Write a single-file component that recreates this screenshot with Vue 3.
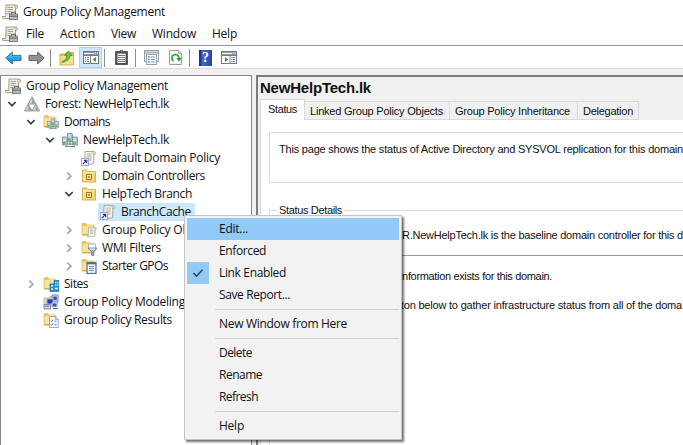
<script setup>
const vFit = {
  mounted(el, { value }) {
    if (!value) return
    const range = document.createRange()
    range.selectNodeContents(el)
    const natural = range.getBoundingClientRect().width
    el.style.letterSpacing = (value - natural) / el.textContent.trim().length + 'px'
  }
}

const menus = [
  { label: 'File', w: 18, cell: 34 },
  { label: 'Action', w: 35, cell: 51 },
  { label: 'View', w: 25, cell: 41 },
  { label: 'Window', w: 44, cell: 60 },
  { label: 'Help', w: 25, cell: 41 }
]

const tree = [
  { label: 'Group Policy Management', level: 0, icon: 'scroll', w: 142 },
  { label: 'Forest: NewHelpTech.lk', level: 1, icon: 'forest', open: true, w: 124 },
  { label: 'Domains', level: 2, icon: 'domains', open: true, w: 46 },
  { label: 'NewHelpTech.lk', level: 3, icon: 'domain', open: true, w: 86 },
  { label: 'Default Domain Policy', level: 4, icon: 'link', w: 118 },
  { label: 'Domain Controllers', level: 4, icon: 'ou', open: false, w: 103 },
  { label: 'HelpTech Branch', level: 4, icon: 'ou', open: true, w: 90 },
  { label: 'BranchCache', level: 5, icon: 'link', selected: true, w: 70 },
  { label: 'Group Policy Objects', level: 4, icon: 'gpo', open: false, w: 112 },
  { label: 'WMI Filters', level: 4, icon: 'wmi', open: false, w: 59 },
  { label: 'Starter GPOs', level: 4, icon: 'starter', open: false, w: 66 },
  { label: 'Sites', level: 2, icon: 'sites', open: false, w: 24 },
  { label: 'Group Policy Modeling', level: 2, icon: 'modeling', w: 121 },
  { label: 'Group Policy Results', level: 2, icon: 'results', w: 108 }
]

const tabs = [
  { label: 'Status', w: 29, cell: 45, active: true },
  { label: 'Linked Group Policy Objects', w: 133, cell: 145 },
  { label: 'Group Policy Inheritance', w: 115, cell: 128 },
  { label: 'Delegation', w: 50, cell: 61 }
]

const actions = [
  { label: 'Edit...', w: 29, hot: true },
  { label: 'Enforced', w: 47 },
  { label: 'Link Enabled', w: 67, checked: true },
  { label: 'Save Report...', w: 71 },
  null,
  { label: 'New Window from Here', w: 128 },
  null,
  { label: 'Delete', w: 33 },
  { label: 'Rename', w: 43 },
  { label: 'Refresh', w: 39 },
  null,
  { label: 'Help', w: 25 }
]
</script>

<template>
  <div class="window">
    <svg class="defs" width="0" height="0" aria-hidden="true">
      <defs>
        <linearGradient id="blue" x1="0" y1="0" x2="0" y2="1">
          <stop offset="0" stop-color="#8fe0fb" /><stop offset=".5" stop-color="#27a5e3" /><stop offset="1" stop-color="#1582c5" />
        </linearGradient>
        <symbol id="folder" viewBox="0 0 16 16">
          <path d="M1 2.5q0-1 1-1h3l1.5 1.5H12q1 0 1 1V13H1z" fill="#eac766" stroke="#d7ad4d" stroke-width=".6" />
          <path d="M1.5 4h4l1-.8H12.5V12.7H1.5z" fill="#f9e29b" />
          <path d="M1.3 12.8h11.5" stroke="#cba044" />
        </symbol>
        <symbol id="scroll" viewBox="0 0 16 16">
          <path d="M4 1h9.5q2 0 2 2t-2 1.3V12q0 2.5-2.5 2.5H1.5Q0 14.5 0 12.5h3.7z" fill="#f1eedd" stroke="#8b8878" stroke-width=".8" />
          <path d="M13.5 1q-1.8 1 0 3.3M5.5 3.5h5.5M5.5 5.5h5.5M5.4 7.5h4M5.2 9.5h3" fill="none" stroke="#9b998d" stroke-width=".9" />
          <rect x="7.5" y="10" width="8" height="5.5" fill="#b9bec2" stroke="#63696e" stroke-width=".8" />
          <path d="M9.5 10V8.3h4V10" fill="none" stroke="#555d65" />
          <path d="M7.5 12.2h8" stroke="#565e65" />
        </symbol>
        <symbol id="paper" viewBox="0 0 16 16">
          <path d="M4 1.5h8.5q2 0 2 1.7T12.8 4.6V12q0 2.2-2 2.2H2q1.8-.5 1.8-2.7z" fill="#f9f5e5" stroke="#9e9b8e" stroke-width=".9" />
          <path d="M12.5 1.5q-1.2 1 .3 3.1M5.7 4h5M5.7 6h5M5.7 8h5M6.5 10h4" fill="none" stroke="#a8aaa4" stroke-width=".9" />
        </symbol>
        <symbol id="link" viewBox="0 0 16 16">
          <use href="#paper" width="16" height="16" />
          <rect x=".5" y="8.5" width="7" height="7" fill="#f4f5ff" stroke="#a4a8cc" />
          <path d="M2 14l3.3-3.3M2.8 10.4h2.9v2.9" stroke="#34349c" stroke-width="1.2" fill="none" />
        </symbol>
        <symbol id="forest" viewBox="0 0 16 16">
          <path d="M8 .8L15.6 15H.4z" fill="#d2d2d2" stroke="#868686" stroke-width=".8" />
          <path d="M8 1.5L11.6 8 8 7.6zM11.8 8.4L15 14.6 11.6 14zM4.2 8.4L7.6 14.6 4.2 14z" fill="#a2a2a2" />
          <path d="M4.2 8h7.6L8 14.8z" fill="#fafafa" stroke="#868686" stroke-width=".8" />
        </symbol>
        <symbol id="server" viewBox="0 0 6 9">
          <path d="M.3.5h4.2l1.2.7v7.3H.3z" fill="#a9bfce" stroke="#657884" stroke-width=".7" />
          <path d="M1 2.3h3M1 4h3" stroke="#eaf8ff" stroke-width=".8" />
          <rect x="1" y="5.4" width="2.6" height="2.2" fill="#5cc74b" />
        </symbol>
        <symbol id="domain" viewBox="0 0 16 16">
          <use href="#server" x="5" y="1" width="6" height="9" />
          <use href="#server" x="0" y="4" width="6" height="10" />
          <use href="#server" x="10" y="4" width="6" height="10" />
          <path d="M8 9v4M3 14.5h10M5.8 12h4.4" stroke="#6c8790" stroke-width="1.2" />
        </symbol>
        <symbol id="domains" viewBox="0 0 16 16">
          <use href="#folder" width="16" height="16" />
          <use href="#domain" x="4" y="3.5" width="12" height="12" />
        </symbol>
        <symbol id="ou" viewBox="0 0 16 16">
          <path d="M1.5 2h4l1.3 1.6H14.5V14h-13z" fill="#f4d781" stroke="#d3ad57" />
          <path d="M2 4.6h12M3 13V5" stroke="#fff0b9" />
          <path d="M5.5 6.5h5v5h-5z" fill="#f9e8a2" stroke="#a67a17" />
          <path d="M7 8h2v2H7z" fill="#c69527" />
        </symbol>
        <symbol id="gpo" viewBox="0 0 16 16">
          <use href="#folder" width="16" height="16" />
          <use href="#paper" x="4.5" y="3.5" width="12" height="13" />
        </symbol>
        <symbol id="wmi" viewBox="0 0 16 16">
          <use href="#folder" width="16" height="16" />
          <rect x="7.5" y="4" width="7" height="5" fill="#fff" stroke="#9fa9b1" stroke-width=".8" />
          <path d="M7 8h9l-3.2 3.8v3.7h-2v-3.7z" fill="#9bb4c8" stroke="#597990" stroke-width=".8" />
          <path d="M8.5 9h5.5" stroke="#eef8ff" />
        </symbol>
        <symbol id="starter" viewBox="0 0 16 16">
          <use href="#folder" width="16" height="16" />
          <rect x="6" y="4.5" width="9" height="11" fill="#eaf4fc" stroke="#49718e" stroke-width="1.2" />
          <path d="M6 5.3h9" stroke="#537087" stroke-width="2" />
          <path d="M8 8.5h5M8 10.5h5M8 12.5h5" stroke="#7295b1" />
        </symbol>
        <symbol id="sites" viewBox="0 0 16 16">
          <use href="#folder" width="16" height="16" />
          <path d="M7 8h4V4.5h5V15.5H7z" fill="#2b8ed0" stroke="#136ba9" stroke-width=".7" />
          <path d="M8 10h2M8 13h2M12.3 6.5h1M14.2 6.5h1M12.3 9h1M14.2 9h1M12 12.5h3" stroke="#dff5ff" stroke-width="1.5" />
        </symbol>
        <symbol id="modeling" viewBox="0 0 16 16">
          <path d="M1 4h5l1-1.5h7V12H1z" fill="#e7dfbd" stroke="#a6a18c" stroke-width=".7" />
          <path d="M9 1h6v7H9z" fill="#dce7fa" stroke="#7184ac" />
          <path d="M10.3 2.5h3.5v3.8h-3.5z" fill="#3454bd" />
          <path d="M4 5h6v5H4z" fill="#2938ae" stroke="#9ba9cd" />
          <path d="M9 9h5v4H9z" fill="#3f55b1" stroke="#c8d3ea" />
          <path d="M1 10.5h6.5V15H1z" fill="#d0d5e5" stroke="#747c99" stroke-width=".8" />
          <path d="M2 12.2h4M10 14.5h5" stroke="#606b83" />
        </symbol>
        <symbol id="results" viewBox="0 0 16 16">
          <use href="#folder" width="16" height="16" />
          <path d="M6.5 4.5h6l2.7 2.7v8.3H6.5z" fill="#fafcff" stroke="#92a0ad" stroke-width=".9" />
          <path d="M12.4 4.7v2.8H15" fill="none" stroke="#92a0ad" stroke-width=".8" />
          <path d="M7.7 8.7l1 1 1.4-2M7.7 12.3l1 1 1.4-2M11.5 9.2h2M11.5 12.8h2" fill="none" stroke="#3c7ec0" />
        </symbol>
        <symbol id="arrow" viewBox="0 0 17 14">
          <path d="M.8 7L7.3 1v3.4H16v5.2H7.3V13z" stroke-linejoin="round" />
        </symbol>
        <symbol id="console" viewBox="0 0 16 13">
          <rect x=".5" y=".5" width="15" height="12" fill="#fff" stroke="#737b82" />
          <path d="M1 1h14v3H1z" fill="#8f999f" />
          <path d="M1 2.5h10M12 2h1M14 2h1" stroke="#f7f7f7" />
          <path d="M1 4.5h14" stroke="#737b82" />
        </symbol>
      </defs>
    </svg>

    <header class="titlebar">
      <svg class="icon"><use href="#scroll" /></svg>
      <span v-fit="142">Group Policy Management</span>
    </header>

    <nav class="menubar">
      <svg class="icon"><use href="#scroll" /></svg>
      <div v-for="m in menus" :key="m.label" class="menu" :style="{ width: m.cell + 'px' }"><span v-fit="m.w">{{ m.label }}</span></div>
    </nav>

    <div class="toolbar">
      <svg class="arrow" fill="url(#blue)" stroke="#2878a9" viewBox="0 0 17 14"><use href="#arrow" /></svg>
      <svg class="arrow forward" fill="#929292" stroke="#636363" viewBox="0 0 17 14"><use href="#arrow" transform="matrix(-1 0 0 1 17 0)" /></svg>
      <i class="divider first"></i>
      <svg class="up" viewBox="0 0 16 16">
        <path d="M1 4h5l1.5-1.5h7V15H1z" fill="#e6bf56" stroke="#c09a42" stroke-width=".8" />
        <path d="M1.5 6h12.8v8.5H1.5z" fill="#f9df8a" />
        <path d="M3 11.5Q7.5 10 7.8 5.6H5.7L9.4 1l3.7 4.6h-2Q10.7 11 3 12.5z" fill="#69c63d" stroke="#36872d" stroke-width=".7" />
      </svg>
      <span class="pressed">
        <svg width="16" height="13" viewBox="0 0 16 13">
          <use href="#console" /><path d="M7.5 5v7" stroke="#888" />
          <path d="M2 6.5h1M2 8.5h1M2 10.5h1" stroke="#347fc0" /><path d="M4 6.5h2M4 8.5h2M4 10.5h2" stroke="#777" />
          <path d="M13 6v5L9.5 8.5z" fill="#35a52b" />
        </svg>
      </span>
      <i class="divider second"></i>
      <svg class="clipboard" viewBox="0 0 13 15">
        <rect x=".7" y="1.7" width="11.6" height="12.6" fill="#555" stroke="#3f3f3f" />
        <rect x="2.5" y="3.5" width="8" height="9.5" fill="#fff" />
        <path d="M3 5.5h7M3 7.5h7M3 9.5h7M3 11.5h7" stroke="#777" />
        <path d="M3.3 3V1.7h2V.5h2.4v1.2h2V3z" fill="#777" stroke="#444" stroke-width=".7" />
      </svg>
      <i class="divider third"></i>
      <svg class="properties" viewBox="0 0 15 15">
        <rect x=".5" y=".5" width="14" height="11" fill="#edf2f7" stroke="#9aa0a6" />
        <path d="M1 2.5h13" stroke="#aeb6bd" stroke-width="2" />
        <rect x="2.5" y="4.5" width="10" height="10" fill="#fff" stroke="#9aa0a6" />
        <path d="M4 7h1.5M4 9.5h1.5M4 12h1.5" stroke="#278ec6" stroke-width="1.4" />
        <path d="M6.5 7H11M6.5 9.5H11M6.5 12H11" stroke="#8b969d" />
      </svg>
      <svg class="refresh" viewBox="0 0 13 15">
        <path d="M.5.5h9l3 3v11H.5z" fill="#fff" stroke="#9b9b9b" />
        <path d="M9.5.5v3h3" fill="#eee" stroke="#aaa" />
        <path d="M4.5 11.1A3.6 3.6 0 1 1 10 8" fill="none" stroke="#44b63d" stroke-width="2" />
        <path d="M7.5 8h5L10 11.7z" fill="#299a2b" />
      </svg>
      <i class="divider fourth"></i>
      <span class="help-button">?</span>
      <svg class="action-pane" viewBox="0 0 16 13">
        <use href="#console" /><path d="M9 5v7" stroke="#888" />
        <path d="M4 6v5l3.5-2.5z" fill="#35a52b" /><path d="M10.5 6.5h1M10.5 8.5h1M10.5 10.5h1" stroke="#347fc0" /><path d="M12 6.5h2M12 8.5h2M12 10.5h2" stroke="#777" />
      </svg>
    </div>

    <main class="workspace">
      <aside class="tree">
        <div v-for="n in tree" :key="n.label" class="node" :class="'level-' + n.level">
          <svg v-if="n.level" class="chevron" :class="{ closed: !n.open, hidden: n.open === undefined }" viewBox="0 0 12 12">
            <path v-if="n.open" d="M2.3 4L6 7.7 9.7 4" /><path v-else d="M4.2 2.5L7.9 6.2 4.2 9.9" />
          </svg>
          <span class="entry" :class="{ selected: n.selected }">
            <svg class="icon"><use :href="'#' + n.icon" /></svg>
            <span class="label"><span v-fit="n.w">{{ n.label }}</span></span>
          </span>
        </div>
      </aside>

      <section class="details">
        <h1><span v-fit="111">NewHelpTech.lk</span></h1>
        <div class="tabs">
          <div v-for="t in tabs" :key="t.label" class="tab" :class="{ active: t.active }" :style="{ width: t.cell + 'px' }"><span v-fit="t.w">{{ t.label }}</span></div>
        </div>
        <div class="page">
          <div class="intro"><span v-fit="404">This page shows the status of Active Directory and SYSVOL replication for this domain</span></div>
          <fieldset>
            <legend><span v-fit="63">Status Details</span></legend>
            <p class="baseline"><span v-fit="281">R.NewHelpTech.lk is the baseline domain controller for this d</span></p>
            <hr>
            <p class="exists"><span v-fit="152">information exists for this domain.</span></p>
            <p class="gather"><span v-fit="284">tton below to gather infrastructure status from all of the doma</span></p>
          </fieldset>
        </div>
      </section>
    </main>

    <div class="context-menu">
      <template v-for="(a, i) in actions" :key="i">
        <div v-if="a" class="action" :class="{ hot: a.hot }">
          <span class="check" :class="{ on: a.checked }"><svg v-if="a.checked" viewBox="0 0 12 12"><path d="M1.5 6l3 3.2 6-6.5" /></svg></span>
          <span v-fit="a.w">{{ a.label }}</span>
        </div>
        <div v-else class="separator"></div>
      </template>
    </div>
  </div>
</template>

<style>
body { margin: 0; background: #fff; overflow: hidden; }
</style>

<style scoped>
* { box-sizing: border-box; }
.window { position: relative; width: 683px; height: 445px; overflow: hidden; display: flex; flex-direction: column; background: #fff; color: #111; font-family: "Open Sans", "Noto Sans", sans-serif; font-size: 12px; line-height: 18px; white-space: nowrap; }
.defs { position: absolute; }
.icon { width: 16px; height: 16px; flex: none; }
.titlebar { height: 23px; display: flex; align-items: center; padding: 1px 0 0 2px; gap: 5px; }
.menubar { height: 22px; display: flex; align-items: center; padding-left: 2px; }
.menu { padding-left: 8px; }
.toolbar { height: 24px; border-top: 1px solid #999; border-bottom: 1px solid #dcdcdc; display: flex; align-items: center; padding: 1px 0 0 5px; flex: none; }
.toolbar > * { flex: none; }
.arrow { width: 17px; height: 14px; }
.forward { margin-left: 6px; }
.divider { width: 1px; height: 18px; background: #8e8e8e; }
.first { margin-left: 5px; }
.up { width: 16px; height: 16px; margin-left: 8px; }
.pressed { width: 23px; height: 21px; margin-left: 4px; background: #cde6fb; border: 1px solid #a9d4f7; display: flex; align-items: center; justify-content: center; }
.second { margin-left: 2px; }
.clipboard { width: 13px; height: 15px; margin-left: 10px; }
.third { margin-left: 7px; }
.properties { width: 15px; height: 15px; margin-left: 8px; }
.refresh { width: 13px; height: 15px; margin-left: 10px; }
.fourth { margin-left: 7px; }
.help-button { width: 13px; height: 16px; margin-left: 9px; background: linear-gradient(90deg, #1c3593 2px, #4868c7 3px, #2444a9); color: #fff; font: bold 14px/16px "Liberation Serif", serif; text-align: center; }
.action-pane { width: 16px; height: 13px; margin-left: 9px; }
.workspace { flex: 1; display: flex; gap: 4px; padding-top: 6px; background: #f0f0f0; min-height: 0; }
.tree { width: 252px; flex: none; border: 1px solid #828790; border-bottom: 0; background: #fff; padding-top: 1px; overflow: hidden; }
.node { height: 18px; display: flex; align-items: center; }
.level-0 { padding-left: 4px; }
.level-1 { padding-left: 5px; }
.level-2 { padding-left: 24px; }
.level-3 { padding-left: 43px; }
.level-4 { padding-left: 62px; }
.level-5 { padding-left: 81px; }
.chevron { width: 12px; height: 12px; margin-right: 6px; flex: none; fill: none; stroke: #404040; stroke-width: 1.7; }
.closed { stroke: #a6a6a6; }
.hidden { visibility: hidden; }
.entry { height: 18px; display: flex; align-items: center; }
.label { padding: 0 4px 0 5px; height: 18px; }
.selected { background: #cce8ff; margin-left: -2px; padding-left: 2px; }
.details { flex: 1; min-width: 0; border-top: 2px solid #7c7c7c; border-left: 2px solid #7c7c7c; padding-left: 2px; background: #f0f0f0; display: flex; flex-direction: column; font-family: "Liberation Sans", Arial, sans-serif; font-size: 11px; }
h1 { margin: 0; font-size: 15px; height: 22px; line-height: 22px; }
.tabs { display: flex; align-items: flex-end; height: 21px; flex: none; }
.tab { height: 19px; line-height: 18px; border: 1px solid #d9d9d9; border-left: 0; border-bottom-color: #d9d9d9; padding-left: 5px; }
.active { height: 21px; line-height: 18px; background: #fff; border-left: 1px solid #d9d9d9; border-bottom: 0; padding-left: 7px; }
.page { flex: 1; background: #fff; border-left: 1px solid #d9d9d9; padding: 12px 0 0 8px; }
.intro { height: 51px; border: 1px solid #dcdcdc; border-right: 0; padding: 7px 0 0 9px; }
fieldset { margin: 19px 0 0; padding: 0; min-width: 0; height: 300px; border: 1px solid #dcdcdc; border-right: 0; }
legend { height: 16px; line-height: 16px; margin-left: 7px; padding: 0 2px; }
p { margin: 0; height: 18px; }
.baseline { padding: 0 0 0 132px; margin-top: 8px; }
hr { border: 0; height: 1px; background: #999; margin: 11px 0 0; }
.exists { padding-left: 130px; margin-top: 11px; }
.gather { padding-left: 128px; margin-top: 11px; }
.context-menu { position: absolute; left: 184px; top: 215px; width: 218px; height: 225px; padding: 2px; border: 1px solid #c5c5c5; background: #f2f2f2; box-shadow: 2px 2px 2px rgba(0, 0, 0, .55); }
.action { height: 22px; display: flex; align-items: center; gap: 10px; }
.hot { background: #91c9f7; }
.check { width: 22px; height: 22px; display: flex; align-items: center; justify-content: center; flex: none; }
.on { background: #91c9f7; }
.check svg { width: 12px; height: 12px; fill: none; stroke: #243e56; stroke-width: 1.4; }
.separator { height: 7px; margin-left: 28px; padding-top: 3px; }
.separator::before { content: ""; display: block; height: 1px; background: #d2d2d2; }
</style>
